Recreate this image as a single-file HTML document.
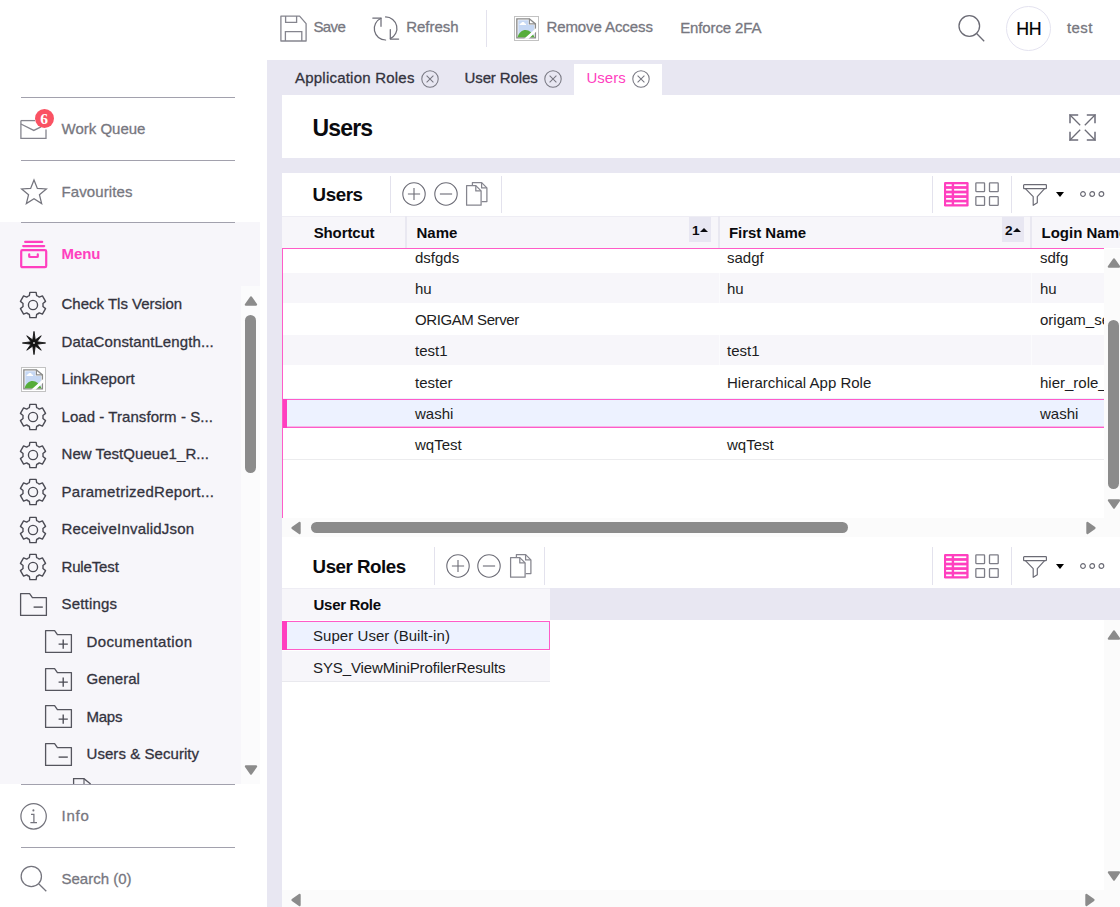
<!DOCTYPE html>
<html lang="en">
<head>
<meta charset="utf-8">
<title>Users</title>
<style>
*{box-sizing:border-box;margin:0;padding:0}
html,body{width:1120px;height:907px;overflow:hidden;background:#fff}
body{position:relative;font-family:"Liberation Sans",sans-serif;font-size:15px;color:#1c1c22}
.a{position:absolute}
.t{position:absolute;white-space:nowrap;line-height:20px;font-size:15px}
.g{color:#777780;-webkit-text-stroke:0.3px #777780}
.d{color:#33333e;-webkit-text-stroke:0.3px #33333e}
.b{font-weight:700;color:#0a0a0e}
.pk{color:#ff3fbf}
svg{position:absolute;overflow:visible}
.ln{position:absolute;left:21px;width:214px;height:1px;background:#a2a1ad}
.vs{position:absolute;width:1px;background:#e3e2ed}
.row{position:absolute;left:283px;width:821px;height:30px}
.alt{background:#f7f6fa}
.c{position:absolute;top:1px;line-height:30px;white-space:nowrap;font-size:15px;color:#1c1c22}
.sort{position:absolute;background:#e8e7f2;font-weight:700;font-size:13.6px;line-height:20px;color:#0a0a0e}
.tri{position:absolute;width:0;height:0;border-style:solid}
</style>
</head>
<body>
<svg width="0" height="0" style="left:0;top:0">
<defs>
<symbol id="gear" overflow="visible">
<path d="M-3.60 -9.22L-3.10 -12.50 L3.10 -12.50 L3.60 -9.22A9.90 9.90 0 0 1 6.19 -7.73L9.28 -8.93 L12.38 -3.57 L9.79 -1.49A9.90 9.90 0 0 1 9.79 1.49L12.38 3.57 L9.28 8.93 L6.19 7.73A9.90 9.90 0 0 1 3.60 9.22L3.10 12.50 L-3.10 12.50 L-3.60 9.22A9.90 9.90 0 0 1 -6.19 7.73L-9.28 8.93 L-12.38 3.57 L-9.79 1.49A9.90 9.90 0 0 1 -9.79 -1.49L-12.38 -3.57 L-9.28 -8.93 L-6.19 -7.73A9.90 9.90 0 0 1 -3.60 -9.22 Z" fill="none" stroke="#4b4b54" stroke-width="1.35" stroke-linejoin="round"/>
<circle cx="0" cy="0" r="4.5" fill="none" stroke="#4b4b54" stroke-width="1.35"/>
</symbol>
<symbol id="fold" overflow="visible">
<path d="M0.6 0.6H9.6L12.4 4.6H26.4V22.4H0.6Z" fill="none" stroke="#55555e" stroke-width="1.3" stroke-linejoin="round"/>
</symbol>
<symbol id="broken" overflow="visible">
<rect x="0.5" y="0.5" width="24" height="24" fill="#fff" stroke="#c2c2c2" stroke-width="1"/>
<path d="M2.85 2.85H15.4L21.4 7.9V21.9H2.85Z" fill="#fff" stroke="#8a8a8a" stroke-width="1.35"/>
<path d="M4.3 4.3H14.4V9H20.1V20.6H4.3Z" fill="#c6d8f4"/>
<path d="M15.4 2.85V7.9H21.4" fill="none" stroke="#8a8a8a" stroke-width="1.2"/>
<path d="M3.6 21.3C4.6 16.6 8.4 13.9 11.7 14C15.2 14.1 18.6 17 20.6 21.3Z" fill="#56ad3a"/>
<path d="M5.7 9.1C5.2 8 6.2 7.3 7 7.6C7.4 5.6 10.4 5.6 10.8 7.5C12.2 7.3 12.6 8.9 11.8 9.1Z" fill="#fff"/>
<path d="M10.2 22.7L22.7 11.4V15.2L14.6 22.7Z" fill="#fff"/>
</symbol>
<symbol id="close" overflow="visible">
<circle cx="0" cy="0" r="8.2" fill="none" stroke="#787882" stroke-width="1.05"/>
<path d="M-3.4 -3.4L3.4 3.4M3.4 -3.4L-3.4 3.4" stroke="#787882" stroke-width="1.05" fill="none"/>
</symbol>
<symbol id="plus" overflow="visible">
<circle cx="0" cy="0" r="11.2" fill="none" stroke="#6b6b75" stroke-width="1.1"/>
<path d="M-6.1 0H6.1M0 -6.1V6.1" stroke="#6b6b75" stroke-width="1.1" fill="none"/>
</symbol>
<symbol id="minus" overflow="visible">
<circle cx="0" cy="0" r="11.2" fill="none" stroke="#6b6b75" stroke-width="1.1"/>
<path d="M-6.1 0H6.1" stroke="#6b6b75" stroke-width="1.1" fill="none"/>
</symbol>
<symbol id="copy" overflow="visible">
<path d="M6.4 3V0.6H15.6L20.9 5.9V19.6H15.6" fill="none" stroke="#85858e" stroke-width="1.25" stroke-linejoin="round"/>
<path d="M15.6 0.6V5.9H20.9" fill="none" stroke="#85858e" stroke-width="1.25" stroke-linejoin="round"/>
<path d="M0.6 3.6H9.8L15.1 8.9V23.2H0.6Z" fill="#fff" stroke="#85858e" stroke-width="1.25" stroke-linejoin="round"/>
<path d="M9.8 3.6V8.9H15.1" fill="none" stroke="#85858e" stroke-width="1.25" stroke-linejoin="round"/>
</symbol>
<symbol id="tbl" overflow="visible">
<rect x="0" y="0" width="24.6" height="24.4" rx="1.2" fill="#ff3fbf"/>
<g fill="#fff"><rect x="2.1" y="2.3" width="5.6" height="1.8"/><rect x="10.1" y="2.3" width="12.2" height="1.8"/><rect x="2.1" y="6.85" width="5.6" height="1.8"/><rect x="10.1" y="6.85" width="12.2" height="1.8"/><rect x="2.1" y="11.4" width="5.6" height="1.8"/><rect x="10.1" y="11.4" width="12.2" height="1.8"/><rect x="2.1" y="15.95" width="5.6" height="1.8"/><rect x="10.1" y="15.95" width="12.2" height="1.8"/><rect x="2.1" y="20.4" width="5.6" height="1.8"/><rect x="10.1" y="20.4" width="12.2" height="1.8"/></g>
</symbol>
<symbol id="grid" overflow="visible">
<g fill="none" stroke="#7d7d87" stroke-width="1.3">
<rect x="0.85" y="0.85" width="8.7" height="8.7" rx="0.6"/><rect x="14.5" y="0.85" width="8.7" height="8.7" rx="0.6"/>
<rect x="0.85" y="14.6" width="8.7" height="8.7" rx="0.6"/><rect x="14.5" y="14.6" width="8.7" height="8.7" rx="0.6"/>
</g>
</symbol>
<symbol id="filter" overflow="visible">
<rect x="0.6" y="0.6" width="22.8" height="4.1" rx="0.7" fill="none" stroke="#6b6b75" stroke-width="1.2"/>
<path d="M2.4 4.7L10.2 12.7V21.3L14.3 18.7V12.7L21.6 4.7" fill="none" stroke="#6b6b75" stroke-width="1.2" stroke-linejoin="round"/>
</symbol>
<symbol id="dots" overflow="visible">
<g fill="none" stroke="#6b6b75" stroke-width="1.2">
<circle cx="0" cy="0" r="2.35"/><circle cx="9.2" cy="0" r="2.35"/><circle cx="18.4" cy="0" r="2.35"/>
</g>
</symbol>
<symbol id="arr" overflow="visible"><polygon points="-5.1,3.6 5.1,3.6 0,-3.5" fill="#8b8b8b" stroke="#8b8b8b" stroke-width="2.2" stroke-linejoin="round"/></symbol>
</defs>
</svg>

<!-- ============ TOP BAR ============ -->
<svg class="a" style="left:280px;top:15px" width="27" height="27">
<path d="M0.9 1.1H19.6L26.1 8.6V26H0.9Z" fill="none" stroke="#85858e" stroke-width="1.3" stroke-linejoin="round"/>
<path d="M5.6 1.1V7.4H16.6V1.1" fill="none" stroke="#85858e" stroke-width="1.3"/>
<path d="M5.4 26V16.7H21.8V26" fill="none" stroke="#85858e" stroke-width="1.3"/>
</svg>
<div class="t g" style="left:313.4px;top:16.5px;letter-spacing:-0.6px">Save</div>
<svg class="a" style="left:372px;top:15px" width="28" height="27">
<g fill="none" stroke="#6f6f79" stroke-width="1.25" stroke-linecap="round" stroke-linejoin="round">
<path d="M9 3.2A11.4 11.4 0 0 0 13.6 25"/>
<path d="M0.8 3.1H9V11.3"/>
<path d="M13.6 1.9A11.4 11.4 0 0 1 18.4 23.6"/>
<path d="M18.3 14.6V24H26.6"/>
</g>
</svg>
<div class="t g" style="left:406.2px;top:16.5px;letter-spacing:0px">Refresh</div>
<div class="vs" style="left:486px;top:10px;height:37px"></div>
<svg class="a" style="left:514px;top:16px" width="25" height="25"><use href="#broken"/></svg>
<div class="t g" style="left:546.4px;top:16.5px;letter-spacing:-0.08px">Remove Access</div>
<div class="t g" style="left:680.2px;top:17.7px;letter-spacing:-0.12px">Enforce 2FA</div>
<svg class="a" style="left:958px;top:15px" width="28" height="28">
<circle cx="11.3" cy="11" r="10.3" fill="none" stroke="#6b6b75" stroke-width="1.3"/>
<path d="M18.6 18.5L26.2 26.2" stroke="#6b6b75" stroke-width="1.3" fill="none"/>
</svg>
<div class="a" style="left:1006px;top:6px;width:45px;height:45px;border:1px solid #e4e3f0;border-radius:50%"></div>
<div class="t" style="left:1016.2px;top:17.1px;font-size:17.8px;line-height:24px;color:#000;letter-spacing:-0.3px;-webkit-text-stroke:0.2px #000">HH</div>
<div class="t g" style="left:1067px;top:17.5px;letter-spacing:0.4px">test</div>

<!-- ============ MAIN BACKGROUND + TABS ============ -->
<div class="a" style="left:267px;top:60px;width:853px;height:847px;background:#e8e7f2"></div>
<div class="t d" style="left:295px;top:67.5px;letter-spacing:0.22px">Application Roles</div>
<svg class="a" style="left:430.3px;top:79.2px" width="1" height="1"><use href="#close"/></svg>
<div class="t d" style="left:464.5px;top:67.5px;letter-spacing:-0.1px">User Roles</div>
<svg class="a" style="left:553.3px;top:79.2px" width="1" height="1"><use href="#close"/></svg>
<div class="a" style="left:574px;top:64px;width:88px;height:31px;background:#fff"></div>
<div class="t pk" style="left:586.5px;top:67.5px">Users</div>
<svg class="a" style="left:641.3px;top:79.2px" width="1" height="1"><use href="#close"/></svg>

<!-- ============ SIDEBAR ============ -->
<div class="a" style="left:0;top:222px;width:260px;height:562px;background:#f7f6fa"></div>
<div class="a" style="left:241px;top:286px;width:19px;height:498px;background:#fbfbfc"></div>
<div class="ln" style="top:97px"></div>
<div class="ln" style="top:160px"></div>
<div class="ln" style="top:222px"></div>
<div class="ln" style="top:784px"></div>
<div class="ln" style="top:847px"></div>
<svg class="a" style="left:20px;top:119px" width="28" height="21">
<path d="M0.9 1.6V19.3H26V10.5" fill="none" stroke="#85858e" stroke-width="1.3" stroke-linejoin="miter"/>
<path d="M0.9 1.6H15" fill="none" stroke="#85858e" stroke-width="1.3"/>
<path d="M0.9 5L13.8 11.4L21 7.8" fill="none" stroke="#85858e" stroke-width="1.3"/>
</svg>
<div class="a" style="left:35px;top:109.2px;width:19px;height:19px;border-radius:50%;background:#fa5263"></div>
<div class="t" style="left:40.3px;top:108.5px;font-family:'Liberation Serif',serif;font-weight:700;font-size:15.5px;line-height:19px;color:#fff">6</div>
<div class="t g" style="left:61.5px;top:119.2px">Work Queue</div>
<svg class="a" style="left:33.5px;top:192.7px" width="1" height="1"><polygon points="0.00,-13.00 3.36,-4.63 12.36,-4.02 5.44,1.77 7.64,10.52 0.00,5.72 -7.64,10.52 -5.44,1.77 -12.36,-4.02 -3.36,-4.63" fill="none" stroke="#74747d" stroke-width="1.25" stroke-linejoin="miter"/></svg>
<div class="t g" style="left:61.5px;top:181.8px;letter-spacing:0.1px">Favourites</div>
<svg class="a" style="left:20px;top:240px" width="28" height="29">
<g fill="none" stroke="#ff3fbf" stroke-width="2.2" stroke-linecap="round" stroke-linejoin="round">
<path d="M5.2 1.9H22.2"/><path d="M3.2 6.1H24.2"/>
<rect x="1.2" y="10.2" width="25" height="17" rx="1.2"/>
<path d="M9.2 14.4V16.4Q9.2 17 10 17H17Q17.8 17 17.8 16.4V14.4"/>
</g></svg>
<div class="t pk" style="left:61.5px;top:244px;font-weight:700;letter-spacing:-0.1px">Menu</div>
<svg class="a" style="left:33.2px;top:304.8px" width="1" height="1"><use href="#gear" transform="scale(1.015)"/></svg>
<div class="t d" style="left:61.5px;top:294.1px">Check Tls Version</div>
<svg class="a" style="left:34.2px;top:342.8px" width="1" height="1"><polygon points="0.00,-11.60 1.26,-3.05 7.21,-7.21 3.05,-1.26 11.60,0.00 3.05,1.26 7.21,7.21 1.26,3.05 0.00,11.60 -1.26,3.05 -7.21,7.21 -3.05,1.26 -11.60,0.00 -3.05,-1.26 -7.21,-7.21 -1.26,-3.05" fill="#141414" stroke="#141414" stroke-width="0.9" stroke-linejoin="round"/><circle cx="0" cy="0" r="1.1" fill="#bbb"/></svg>
<div class="t d" style="left:61.5px;top:331.6px;letter-spacing:0.1px">DataConstantLength...</div>
<svg class="a" style="left:21px;top:367px" width="25" height="25"><use href="#broken"/></svg>
<div class="t d" style="left:61.5px;top:369.1px;letter-spacing:0.07px">LinkReport</div>
<svg class="a" style="left:33.2px;top:416.8px" width="1" height="1"><use href="#gear" transform="scale(1.015)"/></svg>
<div class="t d" style="left:61.5px;top:406.6px;letter-spacing:0.06px">Load - Transform - S...</div>
<svg class="a" style="left:33.2px;top:454.8px" width="1" height="1"><use href="#gear" transform="scale(1.015)"/></svg>
<div class="t d" style="left:61.5px;top:444.1px;letter-spacing:0.05px">New TestQueue1_R...</div>
<svg class="a" style="left:33.2px;top:491.8px" width="1" height="1"><use href="#gear" transform="scale(1.015)"/></svg>
<div class="t d" style="left:61.5px;top:481.6px;letter-spacing:0.28px">ParametrizedReport...</div>
<svg class="a" style="left:33.2px;top:529.8px" width="1" height="1"><use href="#gear" transform="scale(1.015)"/></svg>
<div class="t d" style="left:61.5px;top:519.1px;letter-spacing:0.2px">ReceiveInvalidJson</div>
<svg class="a" style="left:33.2px;top:566.8px" width="1" height="1"><use href="#gear" transform="scale(1.015)"/></svg>
<div class="t d" style="left:61.5px;top:556.6px;letter-spacing:-0.15px">RuleTest</div>
<svg class="a" style="left:20px;top:593.0px" width="27" height="23"><use href="#fold"/><path d="M13.6 14.1H22.8" stroke="#4b4b54" stroke-width="1.35" fill="none"/></svg>
<div class="t d" style="left:61.5px;top:594.1px;letter-spacing:0.2px">Settings</div>
<svg class="a" style="left:45px;top:630px" width="27" height="23"><use href="#fold"/><path d="M13.6 14.1H22.8M18.2 9.5V18.7" stroke="#4b4b54" stroke-width="1.35" fill="none"/></svg>
<div class="t d" style="left:86.5px;top:631.6px;letter-spacing:0.4px">Documentation</div>
<svg class="a" style="left:45px;top:668.0px" width="27" height="23"><use href="#fold"/><path d="M13.6 14.1H22.8M18.2 9.5V18.7" stroke="#4b4b54" stroke-width="1.35" fill="none"/></svg>
<div class="t d" style="left:86.5px;top:669.1px">General</div>
<svg class="a" style="left:45px;top:705px" width="27" height="23"><use href="#fold"/><path d="M13.6 14.1H22.8M18.2 9.5V18.7" stroke="#4b4b54" stroke-width="1.35" fill="none"/></svg>
<div class="t d" style="left:86.5px;top:706.6px;letter-spacing:-0.25px">Maps</div>
<svg class="a" style="left:45px;top:743.0px" width="27" height="23"><use href="#fold"/><path d="M13.6 14.1H22.8" stroke="#4b4b54" stroke-width="1.35" fill="none"/></svg>
<div class="t d" style="left:86.5px;top:744.1px;letter-spacing:0.06px">Users &amp; Security</div>
<svg class="a" style="left:73px;top:778px" width="19" height="6"><path d="M0.6 6V0.7H11L17.6 6" fill="none" stroke="#55555e" stroke-width="1.3"/><path d="M11 0.7V6" fill="none" stroke="#55555e" stroke-width="1.1"/></svg>
<svg class="a" style="left:250.5px;top:301.0px" width="1" height="1"><use href="#arr" transform="rotate(0)"/></svg>
<div class="a" style="left:245px;top:315px;width:11px;height:157.5px;border-radius:5.5px;background:#8b8b8b"></div>
<svg class="a" style="left:250.5px;top:770.0px" width="1" height="1"><use href="#arr" transform="rotate(180)"/></svg>
<svg class="a" style="left:20px;top:803px" width="28" height="28">
<circle cx="13.6" cy="13.3" r="12.7" fill="none" stroke="#74747d" stroke-width="1.25"/>
<path d="M11 11.4H13.9V19.6M10.4 19.7H17" fill="none" stroke="#74747d" stroke-width="1.25"/>
<circle cx="13.4" cy="7.4" r="1.05" fill="#74747d"/>
</svg>
<div class="t g" style="left:61.5px;top:805.6px;letter-spacing:0.75px">Info</div>
<svg class="a" style="left:20px;top:865px" width="28" height="28">
<circle cx="11.3" cy="11.4" r="10.15" fill="none" stroke="#74747d" stroke-width="1.25"/>
<path d="M18.4 18.5L26.3 26.3" stroke="#74747d" stroke-width="1.25" fill="none"/>
</svg>
<div class="t g" style="left:61.5px;top:869.3px">Search (0)</div>
<!-- ============ PANELS ============ -->
<div class="a" style="left:282px;top:95px;width:838px;height:63px;background:#fff"></div>
<div class="t b" style="left:312.6px;top:113.4px;font-size:23px;line-height:30px;letter-spacing:-0.85px">Users</div>
<svg class="a" style="left:1069px;top:114px" width="27" height="27">
<g fill="none" stroke="#90909a" stroke-width="2">
<path d="M1 9.2V1H9.2"/><path d="M17.8 1H26V9.2"/><path d="M26 17.8V26H17.8"/><path d="M9.2 26H1V17.8"/>
</g>
<g fill="none" stroke="#6d6d77" stroke-width="1.25">
<path d="M1 1L11.2 11.2"/><path d="M26 1L15.8 11.2"/><path d="M26 26L15.8 15.8"/><path d="M1 26L11.2 15.8"/>
</g></svg>
<div class="a" style="left:282px;top:173px;width:838px;height:734px;background:#fff"></div>
<div class="t b" style="left:312.6px;top:181.5px;font-size:18.75px;line-height:26px;letter-spacing:-0.45px">Users</div>
<div class="vs" style="left:390px;top:176px;height:37px"></div>
<div class="vs" style="left:501px;top:176px;height:37px"></div>
<div class="vs" style="left:932px;top:176px;height:37px"></div>
<div class="vs" style="left:1011px;top:176px;height:37px"></div>
<svg class="a" style="left:414px;top:194px" width="1" height="1"><use href="#plus"/></svg>
<svg class="a" style="left:446px;top:194px" width="1" height="1"><use href="#minus"/></svg>
<svg class="a" style="left:466px;top:182px" width="22" height="24"><use href="#copy"/></svg>
<svg class="a" style="left:944px;top:182px" width="25" height="25"><use href="#tbl"/></svg>
<svg class="a" style="left:975.2px;top:182.2px" width="24" height="24"><use href="#grid"/></svg>
<svg class="a" style="left:1023px;top:184px" width="24" height="22"><use href="#filter"/></svg>
<div class="tri" style="left:1055.5px;top:192.2px;border-width:5px 4.6px 0 4.6px;border-color:#000 transparent transparent transparent"></div>
<svg class="a" style="left:1083px;top:194.2px" width="1" height="1"><use href="#dots"/></svg>
<div class="a" style="left:282px;top:216px;width:838px;height:32px;background:#f7f6fa;border-top:1px solid #eeedf4"></div>
<div class="a" style="left:405px;top:216px;width:2px;height:32px;background:#e9e8f1"></div>
<div class="a" style="left:718px;top:216px;width:2px;height:32px;background:#e9e8f1"></div>
<div class="a" style="left:1030px;top:216px;width:2px;height:32px;background:#e9e8f1"></div>
<div class="t b" style="left:313.7px;top:222.5px;letter-spacing:-0.12px">Shortcut</div>
<div class="t b" style="left:416.5px;top:222.5px">Name</div>
<div class="t b" style="left:729px;top:222.5px;letter-spacing:-0.05px">First Name</div>
<div class="t b" style="left:1041.5px;top:222.5px">Login Name</div>
<div class="sort" style="left:689px;top:217px;width:22px;height:25px;padding:3.8px 0 0 3px">1</div>
<div class="tri" style="left:700px;top:228px;border-width:0 4.5px 4.8px 4.5px;border-color:transparent transparent #0a0a0e transparent"></div>
<div class="sort" style="left:1002px;top:217px;width:22px;height:25px;padding:3.8px 0 0 3px">2</div>
<div class="tri" style="left:1013px;top:228px;border-width:0 4.5px 4.8px 4.5px;border-color:transparent transparent #0a0a0e transparent"></div>
<div class="a" style="left:282px;top:248px;width:822px;height:270px;background:#fff;overflow:hidden">
<div class="row" style="left:0;width:822px;top:-6.50px;"><span class="c" style="left:133px">dsfgds</span><span class="c" style="left:445px">sadgf</span><span class="c" style="left:758px">sdfg</span></div>
<div class="row alt" style="left:0;width:822px;top:24.75px;"><i class="a" style="left:437px;top:0;width:1px;height:30px;background:#fbfbfd"></i><i class="a" style="left:749px;top:0;width:1px;height:30px;background:#fbfbfd"></i><span class="c" style="left:133px">hu</span><span class="c" style="left:445px">hu</span><span class="c" style="left:758px">hu</span></div>
<div class="row" style="left:0;width:822px;top:56.00px;"><span class="c" style="left:133px;letter-spacing:-0.42px">ORIGAM Server</span><span class="c" style="left:445px"></span><span class="c" style="left:758px">origam_server</span></div>
<div class="row alt" style="left:0;width:822px;top:87.25px;"><i class="a" style="left:437px;top:0;width:1px;height:30px;background:#fbfbfd"></i><i class="a" style="left:749px;top:0;width:1px;height:30px;background:#fbfbfd"></i><span class="c" style="left:133px">test1</span><span class="c" style="left:445px">test1</span><span class="c" style="left:758px"></span></div>
<div class="row" style="left:0;width:822px;top:118.50px;"><span class="c" style="left:133px">tester</span><span class="c" style="left:445px">Hierarchical App Role</span><span class="c" style="left:758px">hier_role_user</span></div>
<div class="row" style="left:0;width:822px;top:149.75px;background:#edf2ff;"><span class="c" style="left:133px">washi</span><span class="c" style="left:445px"></span><span class="c" style="left:758px">washi</span></div>
<div class="row" style="left:0;width:822px;top:181.00px;"><span class="c" style="left:133px">wqTest</span><span class="c" style="left:445px">wqTest</span><span class="c" style="left:758px"></span></div>
<div class="a" style="left:0;top:151px;width:822px;height:29px;border-top:1.25px solid #ff5cc8;border-bottom:1.25px solid #ff5cc8"></div>
<div class="a" style="left:0;top:178px;width:822px;height:1px;background:rgba(255,92,200,0.4)"></div><div class="a" style="left:0;top:151px;width:5px;height:29px;background:#ff3fbf"></div>
<div class="a" style="left:0;top:210.5px;width:822px;height:1.25px;background:#ececee"></div>
<div class="a" style="left:0;top:0;width:822px;height:1.25px;background:#ff5cc8"></div>
<div class="a" style="left:0;top:0;width:1.25px;height:270px;background:#ff5cc8"></div>
</div>
<div class="a" style="left:1104px;top:249px;width:16px;height:269px;background:#fbfbfb"></div>
<div class="a" style="left:282px;top:517.5px;width:838px;height:19px;background:#fbfbfb"></div>
<svg class="a" style="left:1113.6px;top:263.2px" width="1" height="1"><use href="#arr" transform="rotate(0)"/></svg>
<div class="a" style="left:1108px;top:320px;width:11px;height:169px;border-radius:5.5px;background:#8b8b8b"></div>
<svg class="a" style="left:1113.6px;top:504.2px" width="1" height="1"><use href="#arr" transform="rotate(180)"/></svg>
<svg class="a" style="left:296.0px;top:527.5px" width="1" height="1"><use href="#arr" transform="rotate(270)"/></svg>
<div class="a" style="left:311px;top:522.3px;width:536.5px;height:11px;border-radius:5.5px;background:#8b8b8b"></div>
<svg class="a" style="left:1090.5px;top:527.5px" width="1" height="1"><use href="#arr" transform="rotate(90)"/></svg>
<div class="t b" style="left:312.6px;top:553.5px;font-size:18.75px;line-height:26px;letter-spacing:-0.5px">User Roles</div>
<div class="vs" style="left:434px;top:547.4px;height:37.4px"></div>
<div class="vs" style="left:544px;top:547.4px;height:37.4px"></div>
<div class="vs" style="left:932px;top:547.4px;height:37.4px"></div>
<div class="vs" style="left:1011px;top:547.4px;height:37.4px"></div>
<svg class="a" style="left:458px;top:566px" width="1" height="1"><use href="#plus"/></svg>
<svg class="a" style="left:489.2px;top:566px" width="1" height="1"><use href="#minus"/></svg>
<svg class="a" style="left:510px;top:554px" width="22" height="24"><use href="#copy"/></svg>
<svg class="a" style="left:944px;top:554px" width="25" height="25"><use href="#tbl"/></svg>
<svg class="a" style="left:975.2px;top:554.2px" width="24" height="24"><use href="#grid"/></svg>
<svg class="a" style="left:1023px;top:556px" width="24" height="22"><use href="#filter"/></svg>
<div class="tri" style="left:1055.5px;top:564.2px;border-width:5px 4.6px 0 4.6px;border-color:#000 transparent transparent transparent"></div>
<svg class="a" style="left:1083px;top:566.2px" width="1" height="1"><use href="#dots"/></svg>
<div class="a" style="left:282px;top:588px;width:268px;height:32px;background:#f7f6fa;border-top:1px solid #eeedf4"></div>
<div class="a" style="left:550px;top:588px;width:570px;height:32px;background:#e8e7f2"></div>
<div class="t b" style="left:313.6px;top:595.2px;letter-spacing:-0.32px">User Role</div>
<div class="a" style="left:282px;top:620.5px;width:268px;height:29.5px;background:#edf2ff;border:1.25px solid #ff5cc8"></div>
<div class="a" style="left:282px;top:620.5px;width:5px;height:29.5px;background:#ff3fbf"></div>
<div class="a" style="left:282px;top:650.5px;width:268px;height:31px;background:#f7f6fa;border-bottom:1.25px solid #e9e9ee"></div>
<div class="t" style="left:313px;top:626px;letter-spacing:0.05px">Super User (Built-in)</div>
<div class="t" style="left:313px;top:658px;letter-spacing:-0.12px">SYS_ViewMiniProfilerResults</div>
<div class="a" style="left:1104px;top:620px;width:16px;height:287px;background:#fbfbfb"></div>
<div class="a" style="left:282px;top:889.7px;width:838px;height:18px;background:#fbfbfb"></div>
<svg class="a" style="left:1113.6px;top:635.2px" width="1" height="1"><use href="#arr" transform="rotate(0)"/></svg>
<svg class="a" style="left:1113.6px;top:876.2px" width="1" height="1"><use href="#arr" transform="rotate(180)"/></svg>
<svg class="a" style="left:296.0px;top:899.5px" width="1" height="1"><use href="#arr" transform="rotate(270)"/></svg>
<svg class="a" style="left:1090.0px;top:899.5px" width="1" height="1"><use href="#arr" transform="rotate(90)"/></svg>
</body>
</html>
